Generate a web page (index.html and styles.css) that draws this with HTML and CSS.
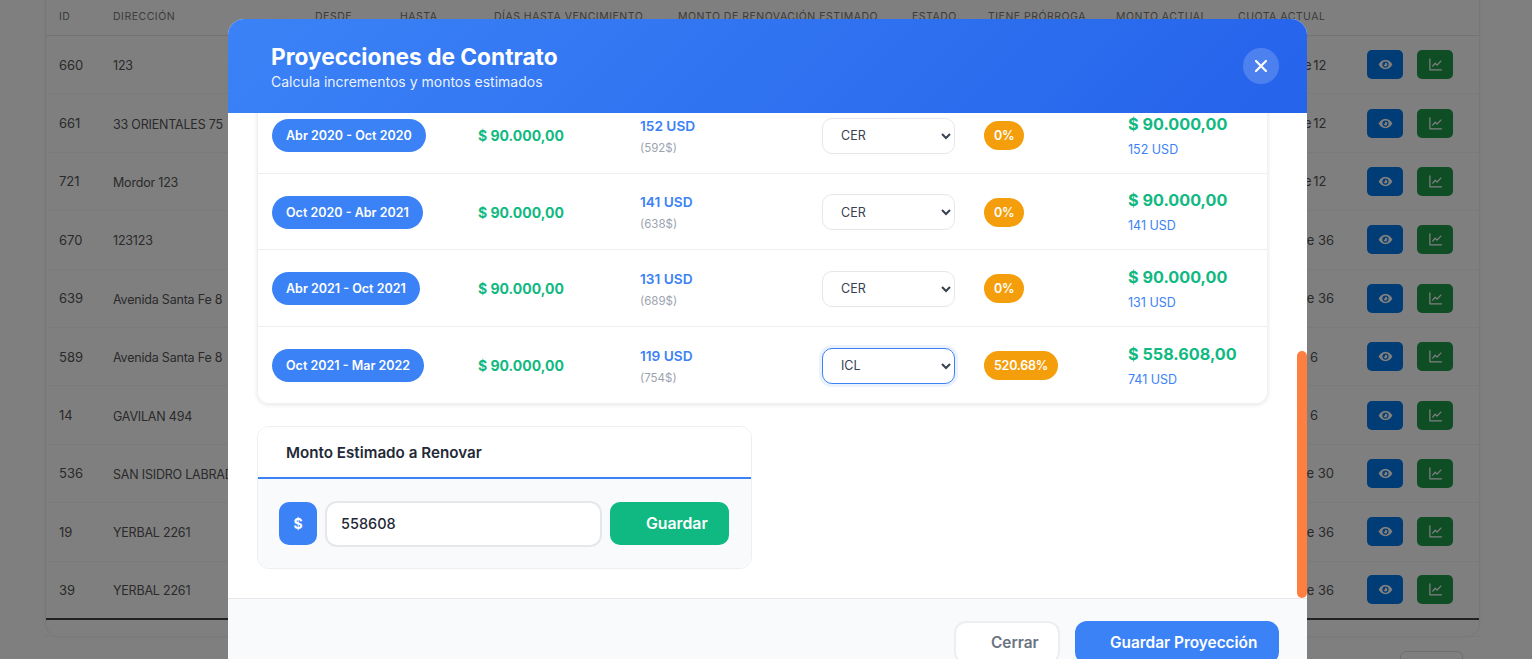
FILE: index.html
```html
<!DOCTYPE html>
<html lang="es">
<head>
<meta charset="utf-8">
<title>Proyecciones de Contrato</title>
<link rel="stylesheet" href="styles.css">
</head>
<body>
<svg class="defs" width="0" height="0" aria-hidden="true">
  <symbol id="eye" viewBox="0 0 24 24"><path fill-rule="evenodd" d="M12 4.500C6.800 4.500 2.900 8.400 1 12c1.900 3.600 5.800 7.500 11 7.500s9.100-3.900 11-7.500c-1.900-3.600-5.800-7.500-11-7.500zM12 7a5 5 0 1 1 0 10 5 5 0 0 1 0-10z"/><path d="M12 9a3 3 0 1 1-3 3c.6.500 1.500.500 2.100-.1.500-.6.500-1.500-.1-2.300.3-.4.600-.6 1-.6z"/></symbol>
  <symbol id="chart" viewBox="0 0 24 24"><path fill="none" stroke="currentColor" stroke-width="2" stroke-linecap="round" stroke-linejoin="round" d="M3 3v17.500h18.500M7.500 14.500l4-4.500 3 3 6-6.500"/></symbol>
</svg>
<main class="page">
  <section class="panel">
    <div class="tr th">
      <span>ID</span><span>DIRECCIÓN</span><span>DESDE</span><span>HASTA</span><span>DÍAS HASTA VENCIMIENTO</span><span>MONTO DE RENOVACIÓN ESTIMADO</span><span>ESTADO</span><span>TIENE PRÓRROGA</span><span>MONTO ACTUAL</span><span>CUOTA ACTUAL</span><span></span>
    </div>
    <div class="tr"><span>660</span><span class="addr">123</span><i></i><i></i><i></i><i></i><i></i><i></i><i></i><span class="cuota c12">Cuota 1 de 12</span><div class="acts"><b class="act view"><svg><use href="#eye"/></svg></b><b class="act graph"><svg><use href="#chart"/></svg></b></div></div>
    <div class="tr"><span>661</span><span class="addr">33 ORIENTALES 75</span><i></i><i></i><i></i><i></i><i></i><i></i><i></i><span class="cuota c12">Cuota 1 de 12</span><div class="acts"><b class="act view"><svg><use href="#eye"/></svg></b><b class="act graph"><svg><use href="#chart"/></svg></b></div></div>
    <div class="tr"><span>721</span><span class="addr">Mordor 123</span><i></i><i></i><i></i><i></i><i></i><i></i><i></i><span class="cuota c12">Cuota 1 de 12</span><div class="acts"><b class="act view"><svg><use href="#eye"/></svg></b><b class="act graph"><svg><use href="#chart"/></svg></b></div></div>
    <div class="tr"><span>670</span><span class="addr">123123</span><i></i><i></i><i></i><i></i><i></i><i></i><i></i><span class="cuota c36">Cuota 1 de 36</span><div class="acts"><b class="act view"><svg><use href="#eye"/></svg></b><b class="act graph"><svg><use href="#chart"/></svg></b></div></div>
    <div class="tr"><span>639</span><span class="addr">Avenida Santa Fe 8</span><i></i><i></i><i></i><i></i><i></i><i></i><i></i><span class="cuota c36">Cuota 1 de 36</span><div class="acts"><b class="act view"><svg><use href="#eye"/></svg></b><b class="act graph"><svg><use href="#chart"/></svg></b></div></div>
    <div class="tr"><span>589</span><span class="addr">Avenida Santa Fe 8</span><i></i><i></i><i></i><i></i><i></i><i></i><i></i><span class="cuota c6">Cuota 1 de 6</span><div class="acts"><b class="act view"><svg><use href="#eye"/></svg></b><b class="act graph"><svg><use href="#chart"/></svg></b></div></div>
    <div class="tr"><span>14</span><span class="addr">GAVILAN 494</span><i></i><i></i><i></i><i></i><i></i><i></i><i></i><span class="cuota c6">Cuota 1 de 6</span><div class="acts"><b class="act view"><svg><use href="#eye"/></svg></b><b class="act graph"><svg><use href="#chart"/></svg></b></div></div>
    <div class="tr"><span>536</span><span class="addr">SAN ISIDRO LABRADOR</span><i></i><i></i><i></i><i></i><i></i><i></i><i></i><span class="cuota c30">Cuota 1 de 30</span><div class="acts"><b class="act view"><svg><use href="#eye"/></svg></b><b class="act graph"><svg><use href="#chart"/></svg></b></div></div>
    <div class="tr"><span>19</span><span class="addr">YERBAL 2261</span><i></i><i></i><i></i><i></i><i></i><i></i><i></i><span class="cuota c36">Cuota 1 de 36</span><div class="acts"><b class="act view"><svg><use href="#eye"/></svg></b><b class="act graph"><svg><use href="#chart"/></svg></b></div></div>
    <div class="tr last"><span>39</span><span class="addr">YERBAL 2261</span><i></i><i></i><i></i><i></i><i></i><i></i><i></i><span class="cuota c36">Cuota 1 de 36</span><div class="acts"><b class="act view"><svg><use href="#eye"/></svg></b><b class="act graph"><svg><use href="#chart"/></svg></b></div></div>
    <div class="panel-foot"></div>
  </section>
  <div class="below"><span class="pager"></span></div>
</main>

<div class="backdrop"></div>

<div class="modal">
  <header class="m-head">
    <div>
      <h1>Proyecciones de Contrato</h1>
      <p>Calcula incrementos y montos estimados</p>
    </div>
    <button class="close" aria-label="Cerrar"><svg viewBox="0 0 14 14" width="14" height="14"><path d="M2 2l10 10M12 2L2 12" fill="none" stroke="#fff" stroke-width="2.200" stroke-linecap="round"/></svg></button>
  </header>
  <div class="m-body">
    <div class="periods">
      <div class="row">
        <span class="pill">Abr 2020 - Oct 2020</span>
        <span class="amt">$ 90.000,00</span>
        <div class="usd"><strong>152 USD</strong><small>(592$)</small></div>
        <select class="sel"><option>CER</option><option>ICL</option></select>
        <div class="pct-c"><span class="pct">0%</span></div>
        <div class="tot"><strong>$ 90.000,00</strong><small>152 USD</small></div>
      </div>
      <div class="row">
        <span class="pill">Oct 2020 - Abr 2021</span>
        <span class="amt">$ 90.000,00</span>
        <div class="usd"><strong>141 USD</strong><small>(638$)</small></div>
        <select class="sel"><option>CER</option><option>ICL</option></select>
        <div class="pct-c"><span class="pct">0%</span></div>
        <div class="tot"><strong>$ 90.000,00</strong><small>141 USD</small></div>
      </div>
      <div class="row">
        <span class="pill">Abr 2021 - Oct 2021</span>
        <span class="amt">$ 90.000,00</span>
        <div class="usd"><strong>131 USD</strong><small>(689$)</small></div>
        <select class="sel"><option>CER</option><option>ICL</option></select>
        <div class="pct-c"><span class="pct">0%</span></div>
        <div class="tot"><strong>$ 90.000,00</strong><small>131 USD</small></div>
      </div>
      <div class="row">
        <span class="pill">Oct 2021 - Mar 2022</span>
        <span class="amt">$ 90.000,00</span>
        <div class="usd"><strong>119 USD</strong><small>(754$)</small></div>
        <select class="sel focus"><option>ICL</option><option>CER</option></select>
        <div class="pct-c"><span class="pct">520.68%</span></div>
        <div class="tot"><strong>$ 558.608,00</strong><small>741 USD</small></div>
      </div>
    </div>
    <section class="est">
      <h2>Monto Estimado a Renovar</h2>
      <div class="est-body">
        <span class="dollar">$</span>
        <input class="amount" type="text" value="558608">
        <button class="save">Guardar</button>
      </div>
    </section>
  </div>
  <footer class="m-foot">
    <button class="btn-close">Cerrar</button>
    <button class="btn-save">Guardar Proyección</button>
  </footer>
  <div class="thumb"></div>
</div>
</body>
</html>
```
FILE: styles.css
```css
* { box-sizing: border-box; }
html, body { margin: 0; height: 659px; overflow: hidden; }
body { font-family: Inter, "Liberation Sans", sans-serif; background: #fff; color: #1f2937; position: relative; width: 1532px; }
.defs { position: absolute; }

.page { padding-left: 45px; width: 1480px; }
.panel { width: 1435px; border-left: 1px solid #eceef1; border-right: 1px solid #eceef1; border-radius: 0 0 14px 14px; height: 636px; box-shadow: 0 1px 3px rgba(0,0,0,.06); }
.tr { display: grid; grid-template-columns: 54px 202px 85px 94px 184px 234px 76px 128px 122px 129px 1fr; height: 58.400px; align-items: center; padding-left: 13px; font-size: 13px; color: #555; border-bottom: 1px solid #f3f4f6; white-space: nowrap; }
.th { height: 36px; padding-bottom: 2px; font-size: 10.500px; letter-spacing: .5px; color: #777; border-bottom: 1px solid #e5e7eb; }
.tr.last { border-bottom: 2px solid #444; }
.addr { font-size: 12.500px; letter-spacing: -.2px; padding-top: 2px; }
.panel-foot { height: 16px; }
.cuota { width: 96px; text-align: right; }
.cuota.c12 { width: 88.500px; word-spacing: -2px; }
.cuota.c6 { width: 80px; }
.acts { display: flex; gap: 14px; }
.act { width: 36px; height: 29px; border-radius: 5px; display: flex; align-items: center; justify-content: center; }
.act svg { width: 15px; height: 15px; color: #fff; fill: #fff; }
.view { background: #0078ea; }
.graph { background: #1f9c49; }
.below { height: 30px; border-top: 1px solid #f3f4f6; display: flex; justify-content: flex-end; padding: 14px 17px 0 0; margin-left: -2px; }
.pager { width: 63px; height: 30px; border: 1px solid #ddd; border-radius: 6px; }

.backdrop { position: absolute; inset: 0; background: rgba(0,0,0,.5); }

.modal { position: absolute; left: 228px; top: 19px; width: 1079px; height: 680px; display: flex; flex-direction: column; background: #fff; border-radius: 16px 16px 0 0; }
.m-head { height: 94px; flex: none; display: flex; align-items: center; justify-content: space-between; padding: 2px 28px 0 43px; color: #fff; background: linear-gradient(135deg, #3b82f6, #2563eb); border-radius: 16px 16px 0 0; }
.m-head h1 { margin: 0; font-size: 22.700px; font-weight: 700; line-height: 30px; }
.m-head p { margin: 0; font-size: 14px; line-height: 20px; color: rgba(255,255,255,.92); }
.close { width: 36px; height: 36px; border: 0; padding: 0; margin-top: -2px; border-radius: 50%; background: rgba(255,255,255,.18); display: flex; align-items: center; justify-content: center; }

.m-body { height: 485px; flex: none; overflow: hidden; display: flex; flex-direction: column; justify-content: flex-end; padding: 0 39px 29px 29px; }
.periods { flex: none; border: 1px solid #eef0f3; border-top: 0; border-radius: 0 0 12px 12px; box-shadow: 0 1px 4px rgba(0,0,0,.1); width: 1011px; }
.row { height: 76.500px; display: grid; grid-template-columns: 206px 163px 181px 162px 145px 1fr; align-items: center; padding: 2px 0 0 14px; border-bottom: 1px solid #eceef1; }
.row:last-child { border-bottom: 0; }
.pill { justify-self: start; height: 33px; line-height: 33px; padding: 0 14px; border-radius: 17px; background: #3b82f6; color: #fff; font-size: 12.500px; font-weight: 600; white-space: nowrap; }
.amt { color: #10b981; font-size: 14px; font-weight: 700; }
.usd { padding-top: 4px; margin-left: -1px; }
.usd strong { display: block; color: #3b82f6; font-size: 13.700px; font-weight: 600; line-height: 20px; }
.usd small { display: block; color: #9ca3af; font-size: 11.500px; line-height: 24px; }
.sel { width: 133px; height: 36px; padding: 0 0 0 14px; font: 12.500px Inter, sans-serif; color: #374151; background: #fff; border: 1px solid #e5e7eb; border-radius: 10px; }
.sel.focus { border-color: #3b82f6; box-shadow: 0 0 0 3px rgba(59,130,246,.1); }
.pct { display: inline-block; height: 29px; line-height: 29px; padding: 0 10px; border-radius: 15px; background: #f59e0b; color: #fff; font-size: 12.500px; font-weight: 600; letter-spacing: -.25px; }
.tot { padding-top: 6px; margin-left: -1px; }
.tot strong { display: block; color: #10b981; font-size: 16.200px; font-weight: 700; line-height: 22px; }
.tot small { display: block; color: #3b82f6; font-size: 12.500px; line-height: 30px; }

.est { flex: none; width: 495px; margin-top: 22px; border: 1px solid #eceef1; border-radius: 12px; overflow: hidden; }
.est h2 { margin: 0; height: 52px; padding-left: 28px; font-size: 15.200px; font-weight: 600; line-height: 51px; color: #1f2937; background: #fff; border-bottom: 2px solid #3b82f6; }
.est-body { display: flex; align-items: center; height: 89px; padding: 0 21px; gap: 8px; background: #f9fafb; }
.dollar { width: 38px; height: 43px; line-height: 43px; text-align: center; background: #3b82f6; color: #fff; font-weight: 700; font-size: 14px; border-radius: 10px; }
.amount { width: 277px; height: 46px; padding: 0 14px; font: 500 14.500px Inter, sans-serif; color: #1f2937; border: 2px solid #e5e7eb; border-radius: 12px; background: #fff; }
.save { width: 119px; height: 43px; padding: 0 0 0 36px; text-align: left; background: #10b981; color: #fff; border: 0; border-radius: 10px; font: 600 15.800px Inter, sans-serif; }

.m-foot { flex: 1; display: flex; justify-content: flex-end; gap: 15px; padding: 22px 28px 0 0; background: #f9fafb; border-top: 1px solid #e5e7eb; }
.btn-close, .btn-save { height: 43px; padding: 0 0 0 35px; text-align: left; font: 600 15.400px Inter, sans-serif; border-radius: 12px; }
.btn-close { width: 106px; background: #fff; color: #6b7280; border: 2px solid #eceef1; }
.btn-save { width: 204px; background: #3b82f6; color: #fff; border: 0; }

.thumb { position: absolute; right: 0; top: 332px; width: 10px; height: 247px; background: #ff7f41; border-radius: 5px; }
```
